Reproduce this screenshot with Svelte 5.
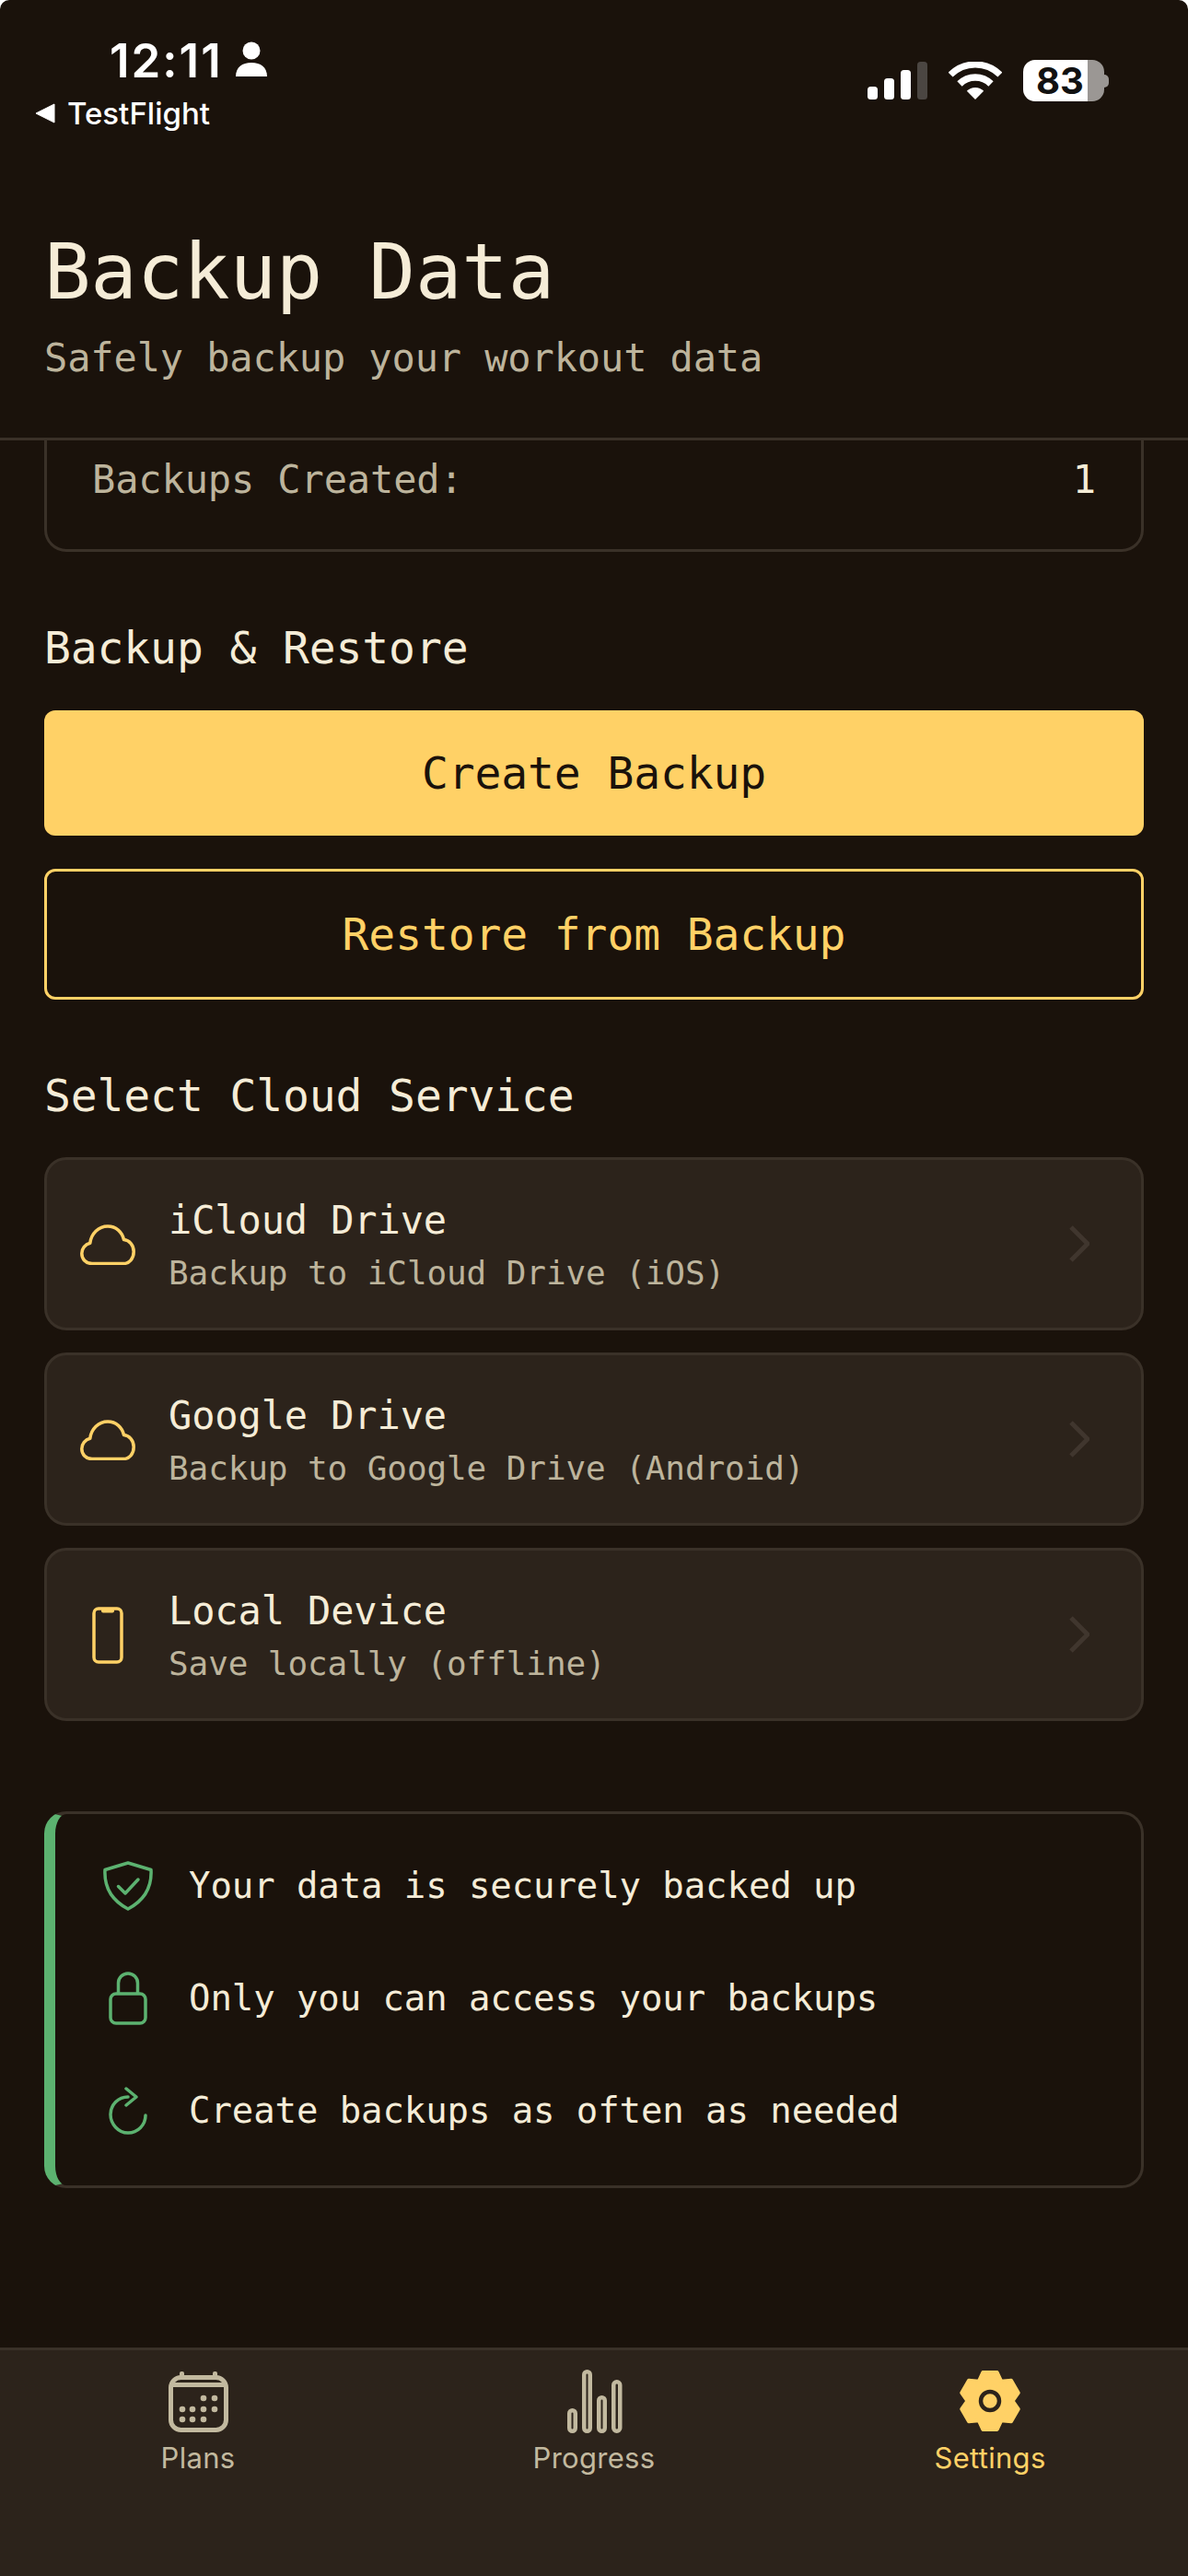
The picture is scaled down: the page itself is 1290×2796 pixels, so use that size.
<script lang="ts">
  const services = [
    { name: 'iCloud Drive', desc: 'Backup to iCloud Drive (iOS)', icon: 'cloud' },
    { name: 'Google Drive', desc: 'Backup to Google Drive (Android)', icon: 'cloud' },
    { name: 'Local Device', desc: 'Save locally (offline)', icon: 'phone' },
  ];

  const notes = [
    { text: 'Your data is securely backed up', icon: 'shield' },
    { text: 'Only you can access your backups', icon: 'lock' },
    { text: 'Create backups as often as needed', icon: 'refresh' },
  ];

  const calendarDots = [
    [41, 32], [53, 32],
    [18, 44], [29, 44], [41, 44], [53, 44],
    [18, 55], [29, 55], [41, 55],
  ];

  function gearPath(): string {
    const pts: string[] = [];
    for (let i = 0; i < 6; i++) {
      const a = -90 + i * 60;
      for (const [off, r] of [[-30, 24.5], [-14, 32], [14, 32]]) {
        const rad = ((a + off) * Math.PI) / 180;
        pts.push(`${(35 + r * Math.cos(rad)).toFixed(1)},${(35 + r * Math.sin(rad)).toFixed(1)}`);
      }
    }
    return pts.join(' ');
  }
</script>

<div class="screen">
  <div class="status">
    <div class="status-left">
      <div class="clock">
        <span class="time">12:11</span>
        <svg class="person" viewBox="0 0 36 38" width="36" height="38">
          <circle cx="18" cy="10" r="9.5" fill="#fff" />
          <path d="M1 38c0-10 7-15 17-15s17 5 17 15z" fill="#fff" />
        </svg>
      </div>
      <div class="back">
        <svg viewBox="0 0 22 22" width="22" height="22">
          <path d="M1 11 21 1v20z" fill="#fff" stroke="#fff" stroke-linejoin="round" />
        </svg>
        <span>TestFlight</span>
      </div>
    </div>
    <div class="status-right">
      <svg viewBox="0 0 65 41" width="65" height="41">
        <rect x="0" y="27" width="11" height="14" rx="3.5" fill="#fff" />
        <rect x="18" y="18" width="11" height="23" rx="3.5" fill="#fff" />
        <rect x="36" y="9" width="11" height="32" rx="3.5" fill="#fff" />
        <rect x="54" y="0" width="11" height="41" rx="3.5" fill="#4b4642" />
      </svg>
      <svg viewBox="0 0 58 41" width="58" height="41">
        <path d="M2.1 14.1a38 38 0 0 1 53.8 0" fill="none" stroke="#fff" stroke-width="7" />
        <path d="M12 24a24 24 0 0 1 34 0" fill="none" stroke="#fff" stroke-width="7.5" />
        <path d="M29 41 19.8 31.8a13 13 0 0 1 18.4 0z" fill="#fff" />
      </svg>
      <div class="battery">
        <div class="cell">83</div>
        <div class="nub"></div>
      </div>
    </div>
  </div>

  <header class="page-head">
    <h1>Backup Data</h1>
    <p>Safely backup your workout data</p>
  </header>

  <main class="scroll">
    <section class="stats">
      <span class="stat-label">Backups Created:</span>
      <span class="stat-value">1</span>
    </section>

    <h2>Backup &amp; Restore</h2>
    <button class="btn primary">Create Backup</button>
    <button class="btn outline">Restore from Backup</button>

    <h2 class="second">Select Cloud Service</h2>
    <div class="services">
      {#each services as s}
        <div class="service">
          <div class="service-icon">
            {#if s.icon === 'cloud'}
              <svg viewBox="0 0 60 44" width="60" height="44">
                <path d="M13 42.500C6 42.500 1.800 37.500 1.800 31.500c0-5.500 3.700-10 9-11.200C12 10 20 2 30 2c9 0 15.500 6 17.500 14.500 6 .5 10.700 6 10.700 13 0 7.500-4.700 13-11.200 13z" fill="none" stroke="#ffd166" stroke-width="3.500" stroke-linejoin="round" />
              </svg>
            {:else}
              <svg viewBox="0 0 34 62" width="34" height="62">
                <rect x="2" y="2" width="30" height="58" rx="5" fill="none" stroke="#ffd166" stroke-width="3.500" />
                <rect x="10" y="2" width="14" height="4.500" rx="2" fill="#ffd166" />
              </svg>
            {/if}
          </div>
          <div class="service-text">
            <span class="service-name">{s.name}</span>
            <span class="service-desc">{s.desc}</span>
          </div>
          <svg class="chevron" viewBox="0 0 22 40" width="22" height="40">
            <path d="M2 2l18 18L2 38" fill="none" stroke="#40362e" stroke-width="5" />
          </svg>
        </div>
      {/each}
    </div>

    <section class="notes">
      {#each notes as n}
        <div class="note">
          <div class="note-icon">
            {#if n.icon === 'shield'}
              <svg viewBox="0 0 54 54" width="54" height="54">
                <path d="M27 2 52 9.500c1 18-7 33-25 42.500C9 42.500 1 27.500 2 9.500z" fill="none" stroke="#5cb270" stroke-width="3.500" stroke-linejoin="round" />
                <path d="M16.500 27.500 24 35l14-15" fill="none" stroke="#5cb270" stroke-width="3.500" stroke-linecap="round" stroke-linejoin="round" />
              </svg>
            {:else if n.icon === 'lock'}
              <svg viewBox="0 0 42 58" width="42" height="58">
                <rect x="2" y="24" width="38" height="32" rx="6" fill="none" stroke="#5cb270" stroke-width="3.500" />
                <path d="M10.500 24V12.500a10.500 10.500 0 0 1 21 0V24" fill="none" stroke="#5cb270" stroke-width="3.500" />
              </svg>
            {:else}
              <svg viewBox="0 0 42 52" width="42" height="52">
                <path d="M21 11C10.500 11 2 19.500 2 30s8.500 20 19 20 19-8.500 19-19" fill="none" stroke="#5cb270" stroke-width="3.500" stroke-linecap="round" />
                <path d="M19 2l11 9-11 9" fill="none" stroke="#5cb270" stroke-width="3.500" stroke-linecap="round" stroke-linejoin="round" />
              </svg>
            {/if}
          </div>
          <span>{n.text}</span>
        </div>
      {/each}
    </section>
  </main>

  <nav class="tabs">
    <div class="tab">
      <svg viewBox="0 0 70 70" width="70" height="70">
        <rect x="5.500" y="9.500" width="60" height="57" rx="11" fill="none" stroke="#c2b99f" stroke-width="5" />
        <rect x="5.500" y="15" width="60" height="5" fill="#c2b99f" />
        <rect x="15" y="3" width="5" height="8" rx="2" fill="#c2b99f" />
        <rect x="51" y="3" width="5" height="8" rx="2" fill="#c2b99f" />
        {#each calendarDots as [x, y]}
          <circle cx={x} cy={y} r="3.300" fill="#c2b99f" />
        {/each}
      </svg>
      <span>Plans</span>
    </div>
    <div class="tab">
      <svg viewBox="0 0 70 70" width="70" height="70">
        <g fill="none" stroke="#c2b99f" stroke-width="4.500">
          <rect x="8.250" y="45.250" width="6.500" height="22.500" rx="3.250" />
          <rect x="24.250" y="3.250" width="6.500" height="64.500" rx="3.250" />
          <rect x="40.250" y="31.250" width="6.500" height="36.500" rx="3.250" />
          <rect x="56.250" y="14.250" width="7" height="53.500" rx="3.500" />
        </g>
      </svg>
      <span>Progress</span>
    </div>
    <div class="tab active">
      <svg viewBox="0 0 70 70" width="70" height="70">
        <polygon points={gearPath()} fill="#ffd166" stroke="#ffd166" stroke-width="4" stroke-linejoin="round" />
        <circle cx="35" cy="35" r="10" fill="#ffd166" stroke="#2c231b" stroke-width="4.500" />
      </svg>
      <span>Settings</span>
    </div>
  </nav>
</div>

<style>
  :global(body) {
    background: #fff;
  }

  .screen {
    width: 1290px;
    height: 2796px;
    display: flex;
    flex-direction: column;
    background: #1a120b;
    border-radius: 10px 10px 0 0;
    overflow: hidden;
    font-family: 'DejaVu Sans Mono', monospace;
    color: #f5ecd7;
  }

  .status {
    height: 160px;
    flex-shrink: 0;
    display: flex;
    justify-content: space-between;
    font-family: Inter, sans-serif;
    color: #fff;
  }

  .status-left {
    padding: 40px 0 0 38px;
  }

  .clock {
    display: flex;
    align-items: center;
    gap: 13px;
    margin-left: 81px;
    height: 52px;
  }

  .time {
    font-size: 51px;
    font-weight: 600;
    line-height: 52px;
    letter-spacing: 2px;
  }

  .person {
    margin-top: -4px;
  }

  .back {
    display: flex;
    align-items: center;
    gap: 13px;
    margin-top: 11px;
    font-size: 33px;
    font-weight: 500;
    line-height: 40px;
  }

  .status-right {
    display: flex;
    align-items: flex-start;
    gap: 23px;
    padding: 67px 86px 0 0;
  }

  .battery {
    display: flex;
    align-items: center;
    margin-top: -2px;
  }

  .cell {
    width: 88px;
    height: 45px;
    border-radius: 13px;
    background: linear-gradient(90deg, #fff 0 70px, #9b9794 70px);
    color: #111;
    font-size: 40px;
    font-weight: 700;
    line-height: 45px;
    padding-left: 14px;
    box-sizing: border-box;
  }

  .nub {
    width: 5px;
    height: 14px;
    background: #9b9794;
    border-radius: 0 5px 5px 0;
  }

  .page-head {
    flex-shrink: 0;
    height: 318px;
    box-sizing: border-box;
    padding: 85px 48px 0;
    border-bottom: 3px solid #3a3128;
  }

  h1 {
    margin: 0;
    font-size: 84px;
    font-weight: 400;
    line-height: 100px;
    letter-spacing: -0.2px;
    color: #f5ecd7;
  }

  .page-head p {
    margin: 16px 0 0;
    font-size: 42px;
    line-height: 56px;
    letter-spacing: -0.12px;
    color: #bdb49c;
  }

  .scroll {
    flex: 1;
    min-height: 0;
    overflow: hidden;
    padding: 0 48px;
  }

  .stats {
    height: 203px;
    margin-top: -82px;
    box-sizing: border-box;
    display: flex;
    justify-content: space-between;
    padding: 94px 49px 0;
    font-size: 42px;
    line-height: 56px;
    letter-spacing: -0.12px;
    border: 3px solid #3a3128;
    border-radius: 24px;
  }

  .stat-label {
    color: #bdb49c;
  }

  h2 {
    margin: 72px 0 0;
    font-size: 48px;
    font-weight: 400;
    line-height: 64px;
    letter-spacing: -0.12px;
  }

  h2.second {
    margin-top: 72px;
  }

  .btn {
    display: block;
    width: 100%;
    box-sizing: border-box;
    font-family: inherit;
    font-size: 48px;
    letter-spacing: -0.12px;
    border-radius: 12px;
  }

  .primary {
    height: 136px;
    margin-top: 36px;
    background: #ffd166;
    border: none;
    color: #1a120b;
  }

  .outline {
    height: 142px;
    margin-top: 36px;
    background: transparent;
    border: 3px solid #ffd166;
    color: #ffd166;
  }

  .services {
    display: flex;
    flex-direction: column;
    gap: 24px;
    margin-top: 35px;
  }

  .service {
    height: 188px;
    box-sizing: border-box;
    display: flex;
    align-items: center;
    padding: 0 20px 0 34px;
    background: #2c231b;
    border: 3px solid #3a3128;
    border-radius: 24px;
  }

  .service-icon {
    width: 64px;
    display: flex;
    justify-content: center;
    margin: 2px 34px 0 0;
  }

  .service-text {
    flex: 1;
    display: flex;
    flex-direction: column;
    gap: 5px;
    padding-top: 3px;
  }

  .service-name {
    font-size: 42px;
    line-height: 56px;
    letter-spacing: -0.12px;
  }

  .service-desc {
    font-size: 36px;
    line-height: 48px;
    letter-spacing: -0.1px;
    color: #bdb49c;
  }

  .chevron {
    margin-right: 36px;
  }

  .notes {
    height: 409px;
    margin-top: 98px;
    box-sizing: border-box;
    display: flex;
    flex-direction: column;
    justify-content: center;
    gap: 50px;
    padding: 0 0 4px 49px;
    border: 3px solid #3a3128;
    border-left: 12px solid #5cb270;
    border-radius: 24px;
  }

  .note {
    display: flex;
    align-items: center;
    height: 72px;
    font-size: 39px;
    letter-spacing: -0.1px;
  }

  .note-icon {
    width: 60px;
    display: flex;
    justify-content: center;
    margin-right: 36px;
  }

  .tabs {
    flex-shrink: 0;
    height: 248px;
    box-sizing: border-box;
    display: flex;
    padding: 20px 0 0;
    background: #2c231b;
    border-top: 3px solid #3a3128;
    font-family: Inter, sans-serif;
    font-size: 31px;
    letter-spacing: 0.3px;
    color: #c2b99f;
  }

  .tab {
    flex: 1;
    display: flex;
    flex-direction: column;
    align-items: center;
    gap: 8px;
  }

  .tab span {
    line-height: 38px;
  }

  .tab.active {
    color: #ffd166;
  }
</style>
